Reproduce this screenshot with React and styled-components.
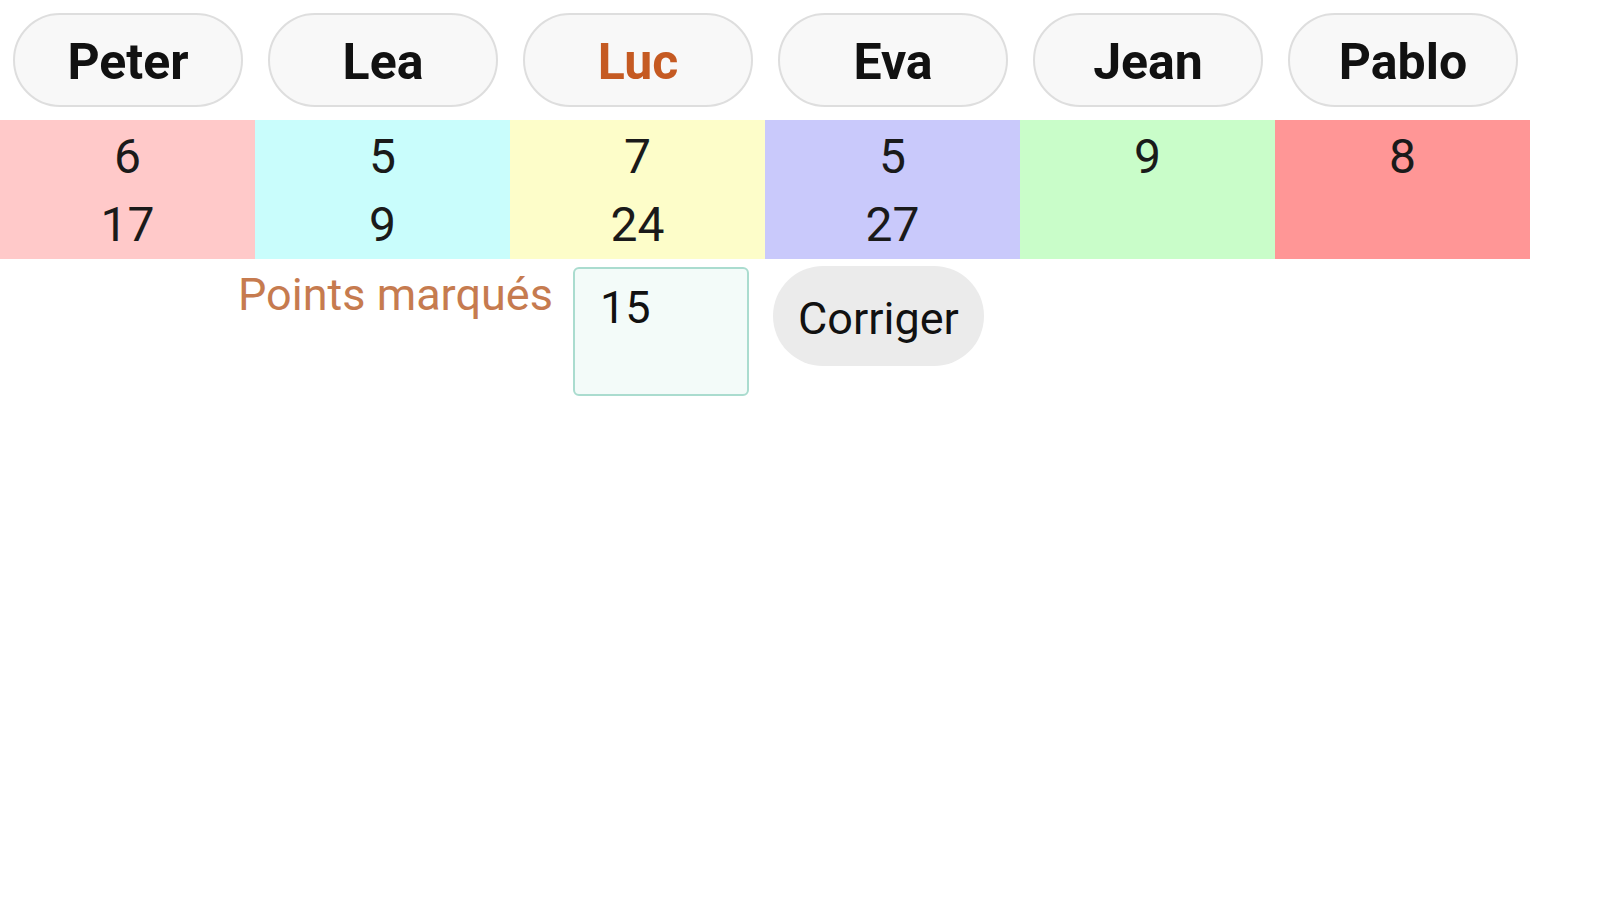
import React from "react";
import styled, { createGlobalStyle } from "styled-components";

const Global = createGlobalStyle`
  html, body { margin: 0; padding: 0; background: #ffffff; }
  body { font-family: Roboto, "Liberation Sans", Arial, sans-serif; color: #111; }
`;

const Page = styled.div`
  display: flex;
  flex-direction: column;
  width: 1530px;
`;

const NameRow = styled.div`
  display: grid;
  grid-template-columns: repeat(6, 255px);
  padding-top: 13px;
  height: 107px;
  box-sizing: border-box;
`;

const NameButton = styled.button`
  justify-self: start;
  margin-left: 13px;
  width: 230px;
  height: 94px;
  box-sizing: border-box;
  border: 2px solid #dedede;
  border-radius: 47px;
  background: #f8f8f8;
  font-family: Roboto, "Liberation Sans", Arial, sans-serif;
  font-weight: 700;
  font-size: 50px;
  color: ${(p) => (p.$active ? "#c55a22" : "#111111")};
  padding: 4px 0 0;
  cursor: pointer;
`;

const ScoreRow = styled.div`
  display: grid;
  grid-template-columns: repeat(6, 255px);
  margin-top: 13px;
  height: 134px;
`;

const ScoreCell = styled.div`
  background: ${(p) => p.$bg};
  display: flex;
  flex-direction: column;
  align-items: center;
  padding-top: 3px;
  font-size: 48px;
  line-height: 68px;
  color: #1a1a1a;
`;

const EntryRow = styled.div`
  display: flex;
  align-items: flex-start;
  padding-left: 238px;
  margin-top: 13px;
`;

const Label = styled.div`
  font-size: 45px;
  color: #c67b4f;
  margin-top: 1px;
  margin-right: 20px;
  white-space: nowrap;
`;

const PointsInput = styled.textarea`
  width: 176px;
  height: 129px;
  box-sizing: border-box;
  border: 2px solid #aadccf;
  border-radius: 6px;
  background: #f3fbf9;
  font-family: Roboto, "Liberation Sans", Arial, sans-serif;
  font-size: 45px;
  color: #111;
  padding: 12px 0 0 25px;
  resize: none;
  outline: none;
  overflow: hidden;
  margin: 0;
`;

const FixButton = styled.button`
  margin-left: 24px;
  margin-top: -1px;
  width: 211px;
  height: 100px;
  border: none;
  border-radius: 50px;
  background: #ebebeb;
  font-family: Roboto, "Liberation Sans", Arial, sans-serif;
  font-size: 45px;
  color: #111;
  padding: 4px 0 0;
  cursor: pointer;
`;

const players = [
  { name: "Peter", bg: "#ffc9c9", scores: ["6", "17"] },
  { name: "Lea", bg: "#c9fdfc", scores: ["5", "9"] },
  { name: "Luc", bg: "#fdfdc9", scores: ["7", "24"], active: true },
  { name: "Eva", bg: "#c9c9fb", scores: ["5", "27"] },
  { name: "Jean", bg: "#c9fdc9", scores: ["9"] },
  { name: "Pablo", bg: "#ff9696", scores: ["8"] },
];

export default function App() {
  return (
    <>
      <Global />
      <Page>
        <NameRow>
          {players.map((p) => (
            <NameButton key={p.name} $active={p.active}>
              {p.name}
            </NameButton>
          ))}
        </NameRow>
        <ScoreRow>
          {players.map((p) => (
            <ScoreCell key={p.name} $bg={p.bg}>
              {p.scores.map((s, i) => (
                <span key={i}>{s}</span>
              ))}
            </ScoreCell>
          ))}
        </ScoreRow>
        <EntryRow>
          <Label>Points marqués</Label>
          <PointsInput defaultValue="15" />
          <FixButton>Corriger</FixButton>
        </EntryRow>
      </Page>
    </>
  );
}
